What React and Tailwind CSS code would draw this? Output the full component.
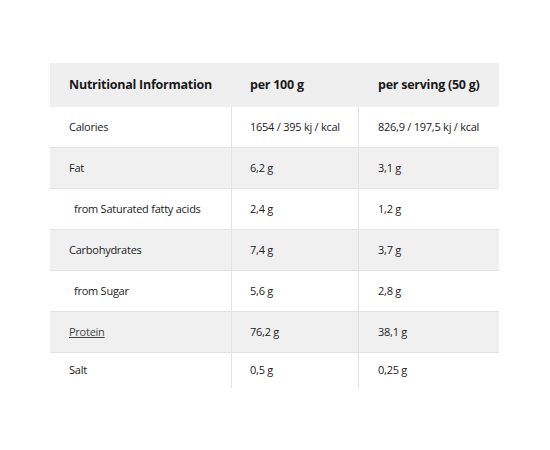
const ROWS = [
  { name: 'Calories', per100: '1654 / 395 kj / kcal', serving: '826,9 / 197,5 kj / kcal', shade: false },
  { name: 'Fat', per100: '6,2 g', serving: '3,1 g', shade: true },
  { name: 'from Saturated fatty acids', per100: '2,4 g', serving: '1,2 g', shade: false, indent: true },
  { name: 'Carbohydrates', per100: '7,4 g', serving: '3,7 g', shade: true },
  { name: 'from Sugar', per100: '5,6 g', serving: '2,8 g', shade: false, indent: true },
  { name: 'Protein', per100: '76,2 g', serving: '38,1 g', shade: true, link: true },
  { name: 'Salt', per100: '0,5 g', serving: '0,25 g', shade: false, last: true },
]

export default function App() {
  return (
    <div className="w-[550px] h-[450px] bg-white pt-[63px] pl-[50px] font-['Open_Sans',sans-serif] text-[#222]">
      <div className="w-[449px]">
        {/* header */}
        <div className="grid grid-cols-[182px_127px_140px] h-[44px] bg-[#efefef] items-center text-[12.5px] font-bold tracking-[-0.25px] text-[#1a1a1a]">
          <div className="pl-[19px]">Nutritional Information</div>
          <div className="pl-[18px]">per 100 g</div>
          <div className="pl-[19px]">per serving (50 g)</div>
        </div>

        {ROWS.map(row => (
          <div
            key={row.name}
            className={`grid grid-cols-[182px_127px_140px] text-[11px] tracking-[-0.25px] ${row.last ? 'h-[35px]' : 'h-[41px] border-b border-[#e2e2e2]'} ${row.shade ? 'bg-[#f0f0f0]' : 'bg-white'}`}
          >
            <div className={`flex items-center border-r border-[#e2e2e2] ${row.indent ? 'pl-[24px]' : 'pl-[19px]'}`}>
              {row.link ? <span className="underline text-[#444]">{row.name}</span> : row.name}
            </div>
            <div className="flex items-center pl-[18px] border-r border-[#e2e2e2]">{row.per100}</div>
            <div className="flex items-center pl-[19px]">{row.serving}</div>
          </div>
        ))}
      </div>
    </div>
  )
}
